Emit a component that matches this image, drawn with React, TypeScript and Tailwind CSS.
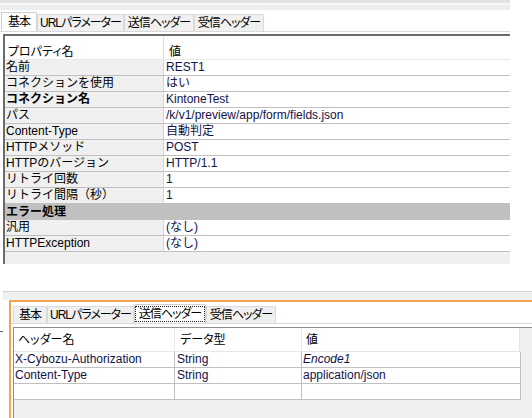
import React from "react";

type Tab = { label: string; w: string; selected?: boolean; focus?: boolean };

const TOP_TABS: Tab[] = [
  { label: "基本", w: "w-[36px]", selected: true },
  { label: "URLパラメーター", w: "w-[87px]" },
  { label: "送信ヘッダー", w: "w-[70px]" },
  { label: "受信ヘッダー", w: "w-[70px]" },
];

const BOTTOM_TABS: Tab[] = [
  { label: "基本", w: "w-[34px]" },
  { label: "URLパラメーター", w: "w-[87px]" },
  { label: "送信ヘッダー", w: "w-[72px]", selected: true, focus: true },
  { label: "受信ヘッダー", w: "w-[70px]" },
];

type Prop = { name: string; value?: string; bold?: boolean; group?: boolean };

const PROPS: Prop[] = [
  { name: "名前", value: "REST1" },
  { name: "コネクションを使用", value: "はい" },
  { name: "コネクション名", value: "KintoneTest", bold: true },
  { name: "パス", value: "/k/v1/preview/app/form/fields.json" },
  { name: "Content-Type", value: "自動判定" },
  { name: "HTTPメソッド", value: "POST" },
  { name: "HTTPのバージョン", value: "HTTP/1.1" },
  { name: "リトライ回数", value: "1" },
  { name: "リトライ間隔（秒）", value: "1" },
  { name: "エラー処理", group: true },
  { name: "汎用", value: "(なし)" },
  { name: "HTTPException", value: "(なし)" },
];

const HEADERS = [
  { name: "X-Cybozu-Authorization", type: "String", value: "Encode1", italic: true },
  { name: "Content-Type", type: "String", value: "application/json" },
  { name: "", type: "", value: "" },
];

function TabStrip({ tabs }: { tabs: Tab[] }) {
  return (
    <>
      {tabs.map((t) => (
        <div
          key={t.label}
          className={
            t.selected
              ? `${t.w} h-[19px] shrink-0 bg-white border-l border-t border-r border-[#d0d0d0] flex items-center justify-center whitespace-nowrap tracking-[-1px] [font-feature-settings:'palt']`
              : `${t.w} h-[17px] shrink-0 bg-[#f0f0f0] border-l border-t border-r border-[#dadada] flex items-center justify-center whitespace-nowrap tracking-[-1px] [font-feature-settings:'palt']`
          }
        >
          {t.focus ? (
            <span className="border border-dotted border-[#222] px-[3px] leading-[14px]">{t.label}</span>
          ) : (
            <span className="leading-[14px]">{t.label}</span>
          )}
        </div>
      ))}
    </>
  );
}

export default function App() {
  return (
    <div className="w-[532px] h-[418px] bg-white overflow-hidden flex flex-col text-[12px] text-black font-['Liberation_Sans','Noto_Sans_CJK_JP',sans-serif]">
      {/* top panel */}
      <div className="w-[510px] shrink-0">
        <div className="h-[3px] bg-[#e2e2e2]" />
        <div className="h-[2px] bg-[#f8f8f8]" />
        <div className="h-[5px] bg-[#ededed]" />
        <div className="h-[2px] bg-white" />
        <div className="h-[20px] border-b border-[#dadada] flex items-end pl-[1px]">
          <TabStrip tabs={TOP_TABS} />
        </div>
        <div className="mt-[2px] ml-[3px] border-l-2 border-t-2 border-[#6c6c6c] bg-[#f0f0f0]">
          <div className="h-[24px] flex bg-white border-b border-[#e8e8e8]">
            <div className="w-[159px] border-r border-[#dcdcdc] pl-[3px] pt-[7px] [font-feature-settings:'palt']">プロパティ名</div>
            <div className="flex-1 pl-[5px] pt-[7px]">値</div>
          </div>
          {PROPS.map((p) =>
            p.group ? (
              <div key={p.name} className="h-[16px] bg-[#c0c0c0] flex items-center pl-[1px] font-bold leading-[15px]">
                {p.name}
              </div>
            ) : (
              <div key={p.name} className="h-[16px] flex border-b border-[#c0c0c0] leading-[15px]">
                <div className={`w-[159px] bg-[#f0f0f0] border-r border-[#d4d4d4] pl-[1px] flex items-center ${p.bold ? "font-bold" : ""}`}>
                  {p.name}
                </div>
                <div className="flex-1 bg-white pl-[2px] flex items-center text-[#12124a]">{p.value}</div>
              </div>
            )
          )}
          <div className="h-[12px]" />
        </div>
      </div>

      {/* gap between panels */}
      <div className="h-[27px] shrink-0" />
      <div className="ml-[3px] h-[1px] bg-[#d3d3d3] shrink-0" />
      <div className="ml-[3px] h-[8px] bg-[#f0f0f0] shrink-0" />

      {/* bottom panel */}
      <div className="flex-1 flex min-h-0">
        <div className="w-[9px] shrink-0">
          <div className="mt-[31px] w-[3px] h-[1px] bg-[#606060]" />
        </div>
        <div className="flex-1 flex flex-col border-t-2 border-l-2 border-[#f3a451] bg-white">
          <div className="h-[22px] shrink-0 border-b border-[#dadada] flex items-end pl-[2px]">
            <TabStrip tabs={BOTTOM_TABS} />
          </div>
          <div className="mt-[3px] ml-[2px] flex-1 border-t border-l border-[#8c8c98] bg-[#f0f0f0]">
            <div className="h-[24px] flex">
              <div className="w-[161px] bg-white border-r border-b border-[#e8e8e8] pl-[4px] flex items-center [font-feature-settings:'palt']">ヘッダー名</div>
              <div className="w-[127px] bg-white border-r border-b border-[#e8e8e8] pl-[5px] flex items-center [font-feature-settings:'palt']">データ型</div>
              <div className="w-[218px] bg-white border-r border-b border-[#e4e4e4] pl-[4px] flex items-center">値</div>
            </div>
            {HEADERS.map((h, i) => (
              <div key={i} className="h-[16px] flex leading-[15px] text-[#12124a]">
                <div className="w-[161px] bg-white border-r border-b border-[#c0c0c0] pl-[1px] flex items-center">{h.name}</div>
                <div className="w-[127px] bg-white border-r border-b border-[#c0c0c0] pl-[2px] flex items-center">{h.type}</div>
                <div className={`w-[219px] bg-white border-r border-b border-[#c0c0c0] pl-[1px] flex items-center ${h.italic ? "italic" : ""}`}>
                  {h.value}
                </div>
              </div>
            ))}
          </div>
        </div>
      </div>
    </div>
  );
}
